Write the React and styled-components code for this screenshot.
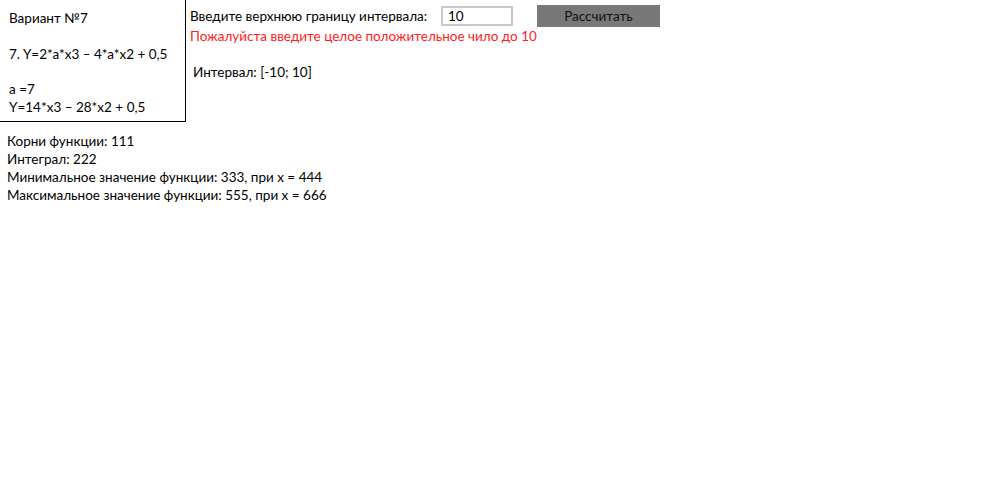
import React, { useState } from "react";
import styled, { createGlobalStyle } from "styled-components";

const GlobalStyle = createGlobalStyle`
  body {
    margin: 0;
    background: #fff;
    font-family: "Lato", "Open Sans", sans-serif;
    font-size: 13.5px;
    color: #000;
  }
`;

const Top = styled.div`
  display: flex;
  align-items: flex-start;
`;

const Variant = styled.div`
  width: 186px;
  height: 122px;
  box-sizing: border-box;
  border-right: 1px solid #000;
  border-bottom: 1px solid #000;
  padding: 9px 0 0 9px;
  line-height: 18px;
`;

const Para = styled.p`
  margin: 0 0 ${(p) => p.gap || 0}px;
`;

const Form = styled.div`
  padding: 5px 0 0 4px;
`;

const Row = styled.div`
  display: flex;
  align-items: center;
  height: 21px;
`;

const Label = styled.label`
  width: 251px;
`;

const Input = styled.input`
  width: 72px;
  height: 20px;
  box-sizing: border-box;
  border: 2px solid #c8c8c8;
  padding: 0 5px;
  font: inherit;
  outline: none;
`;

const Button = styled.button`
  margin-left: 24px;
  width: 123px;
  height: 22px;
  border: none;
  background: #787878;
  color: #111;
  font: inherit;
  padding: 0;
`;

const Error = styled.div`
  color: #ff2020;
  margin-top: 1px;
  line-height: 18px;
`;

const Interval = styled.div`
  margin: 18px 0 0 3px;
  line-height: 18px;
`;

const Results = styled.div`
  padding: 10px 0 0 7px;
  line-height: 18px;
`;

export default function App() {
  const [limit, setLimit] = useState("10");
  return (
    <>
      <GlobalStyle />
      <Top>
        <Variant>
          <Para gap={18}>Вариант №7</Para>
          <Para gap={17}>7. Y=2*a*x3 – 4*a*x2 + 0,5</Para>
          <Para>a =7</Para>
          <Para>Y=14*x3 – 28*x2 + 0,5</Para>
        </Variant>
        <Form>
          <Row>
            <Label htmlFor="limit">Введите верхнюю границу интервала:</Label>
            <Input id="limit" value={limit} onChange={(e) => setLimit(e.target.value)} />
            <Button>Рассчитать</Button>
          </Row>
          <Error>Пожалуйста введите целое положительное чило до 10</Error>
          <Interval>Интервал: [-10; 10]</Interval>
        </Form>
      </Top>
      <Results>
        <div>Корни функции: 111</div>
        <div>Интеграл: 222</div>
        <div>Минимальное значение функции: 333, при x = 444</div>
        <div>Максимальное значение функции: 555, при x = 666</div>
      </Results>
    </>
  );
}
